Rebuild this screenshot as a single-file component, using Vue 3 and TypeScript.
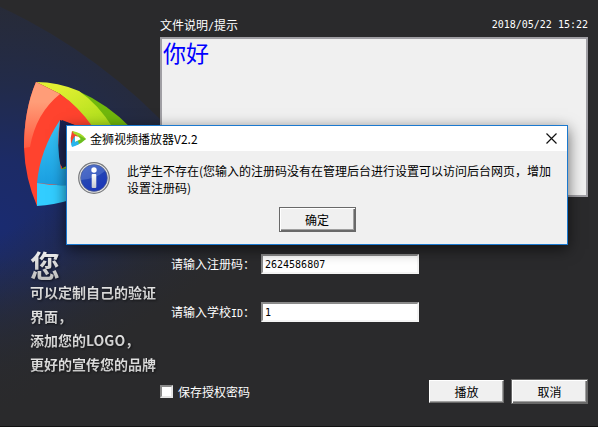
<script setup lang="ts">
import { ref } from 'vue'

const notice = ref('你好')
const regCode = ref('2624586807')
const schoolId = ref('1')
const remember = ref(false)
const dialogOpen = ref(true)
const slogans: string[] = ['可以定制自己的验证', '界面，', '添加您的LOGO，', '更好的宣传您的品牌']
</script>

<template>
  <div class="window">
    <svg class="glow" viewBox="0 0 598 427" preserveAspectRatio="xMinYMin slice" aria-hidden="true">
      <defs>
        <radialGradient id="halo" gradientUnits="userSpaceOnUse" cx="0" cy="225" r="215">
          <stop offset="0" stop-color="#1a2b70" />
          <stop offset="0.3" stop-color="#1c2b66" />
          <stop offset="0.65" stop-color="#222b4a" />
          <stop offset="1" stop-color="#262b3c" stop-opacity="0.8" />
        </radialGradient>
        <linearGradient id="fade" x1="0" y1="0" x2="0" y2="1">
          <stop offset="0.6" stop-color="#2a2a2c" stop-opacity="0" />
          <stop offset="0.98" stop-color="#2a2a2c" />
        </linearGradient>
        <linearGradient id="side" gradientUnits="userSpaceOnUse" x1="60" y1="120" x2="200" y2="330">
          <stop offset="0.25" stop-color="#2a2a2c" stop-opacity="0" />
          <stop offset="0.85" stop-color="#2a2a2c" />
        </linearGradient>
      </defs>
      <circle cx="-234" cy="510" r="555" fill="url(#halo)" />
      <rect width="598" height="427" fill="url(#fade)" />
      <rect width="598" height="427" fill="url(#side)" />
    </svg>

    <aside class="brand">
      <svg class="logo" viewBox="22 80 110 128" aria-hidden="true">
        <defs>
          <linearGradient id="salmon" x1="0" y1="0" x2="0" y2="1">
            <stop offset="0.3" stop-color="#ff9d78" />
            <stop offset="1" stop-color="#ff5a40" />
          </linearGradient>
          <linearGradient id="lime" x1="0" y1="0" x2="1" y2="1">
            <stop offset="0.2" stop-color="#e2f032" />
            <stop offset="1" stop-color="#a5dc18" />
          </linearGradient>
          <linearGradient id="sky" x1="0" y1="0" x2="0" y2="1">
            <stop offset="0" stop-color="#38c6f8" />
            <stop offset="1" stop-color="#1a9ee0" />
          </linearGradient>
        </defs>
        <path d="M78 91Q108 104 132 129L108 140Z" fill="#70b80c" />
        <path d="M36 82Q58 82 79 91Q98 104 113 128L92 127Q76 106 60 94Z" fill="url(#lime)" />
        <path d="M36 82Q24 110 24 148Q25 178 37 206L62 180V120L92 132V126Q78 106 60 94Z" fill="#ff432e" />
        <path d="M36 82Q24 110 24 148L30 147Q36 113 60 94Z" fill="url(#salmon)" />
        <path d="M60 120L92 131V136L68 168Q57 170 58 148Z" fill="#1c2350" />
        <path d="M60 120Q40 150 37 183L70 186V168L61 169Q56 145 60 120Z" fill="url(#sky)" />
        <path d="M37 183Q54 186 70 185V200Q54 205 37 206Z" fill="#32cdff" />
        <path d="M61 169L72 163V168Z" fill="#8ed51c" />
      </svg>
      <h1>您</h1>
      <p v-for="line in slogans" :key="line">{{ line }}</p>
    </aside>

    <main class="panel">
      <header class="bar">
        <label for="notice">文件说明<span class="half">/</span>提示</label>
        <time class="half" datetime="2018-05-22T15:22">2018/05/22 15:22</time>
      </header>
      <textarea id="notice" v-model="notice" class="notice" readonly></textarea>

      <div class="fields">
        <label for="code">请输入注册码：</label>
        <input id="code" v-model="regCode" type="text" />
        <label for="school">请输入学校<span class="half">ID</span>：</label>
        <input id="school" v-model="schoolId" type="text" />
      </div>

      <footer class="bar actions">
        <label class="remember"><input v-model="remember" type="checkbox" />保存授权密码</label>
        <div class="buttons">
          <button class="push" type="button">播放</button>
          <button class="push focus" type="button">取消</button>
        </div>
      </footer>
    </main>

    <section v-if="dialogOpen" class="dialog" role="alertdialog" aria-labelledby="dlg-title" aria-describedby="dlg-text">
      <div class="titlebar">
        <svg class="mini" viewBox="0 0 16 16" aria-hidden="true">
          <path d="M2 0Q0 7 1 13L5 9V5L10 6Q6 1 2 0Z" fill="#f4432c" />
          <path d="M2 0Q11 1 16 8L12 10Q8 4 4 3Z" fill="#a4d827" />
          <path d="M16 8Q12 12 7 14L5 11L11 8L8 4Z" fill="#6bbd20" />
          <path d="M5 5Q2 9 1 13L2 16Q6 15 9 13L8 10L5 11Z" fill="#29b5ed" />
        </svg>
        <h2 id="dlg-title">金狮视频播放器V2.2</h2>
        <button class="close" type="button" aria-label="关闭" @click="dialogOpen = false">
          <svg viewBox="0 0 11 11" aria-hidden="true"><path d="M0.5 0.5L10.5 10.5M10.5 0.5L0.5 10.5" stroke="#111" stroke-width="1.2" /></svg>
        </button>
      </div>
      <div class="message">
        <svg class="info" viewBox="0 0 32 32" aria-hidden="true">
          <defs>
            <linearGradient id="ball" x1="0" y1="0" x2="0.6" y2="1">
              <stop offset="0" stop-color="#3a5cc0" />
              <stop offset="0.5" stop-color="#2446b4" />
              <stop offset="1" stop-color="#1c37b8" />
            </linearGradient>
            <linearGradient id="stem" x1="0" y1="0" x2="0" y2="1">
              <stop offset="0" stop-color="#ffffff" />
              <stop offset="1" stop-color="#c4c8d0" />
            </linearGradient>
          </defs>
          <circle cx="16" cy="16" r="15.3" fill="#e4e4e4" stroke="#77797c" stroke-width="1.2" />
          <circle cx="16" cy="16" r="13.4" fill="url(#ball)" stroke="#5b6480" stroke-width="0.6" />
          <path d="M3 16A13 13 0 0 1 27 9Q18 17 3 18Z" fill="#7f9be0" opacity="0.35" />
          <circle cx="16" cy="8" r="2.7" fill="#fff" />
          <rect x="13.7" y="12" width="4.6" height="14" rx="1" fill="url(#stem)" />
        </svg>
        <p id="dlg-text">此学生不存在(您输入的注册码没有在管理后台进行设置可以访问后台网页，增加设置注册码)</p>
      </div>
      <button class="push focus ok" type="button" @click="dialogOpen = false">确定</button>
    </section>
  </div>
</template>

<style>
body {
  margin: 0;
  background: #2a2a2c;
}
</style>

<style scoped>
.window {
  position: relative;
  box-sizing: border-box;
  min-height: 100vh;
  display: grid;
  grid-template-columns: 160px 1fr;
  overflow: hidden;
  border-bottom: 1px solid #111;
  background: #2a2a2c;
  color: #fff;
  font: 12px/18px "Noto Sans CJK SC", sans-serif;
}
.window * {
  box-sizing: border-box;
}
h1,
h2,
p {
  margin: 0;
}
.glow {
  position: absolute;
  inset: 0;
  width: 100%;
  height: 100%;
}
.half {
  font-family: "DejaVu Sans Mono", monospace;
  font-size: 10px;
  line-height: 10px;
}
.brand {
  position: relative;
  padding: 80px 0 0 30px;
  white-space: nowrap;
}
.logo {
  display: block;
  width: 110px;
  height: 128px;
  margin: 0 0 40px -8px;
}
.brand h1,
.brand p {
  color: transparent;
  background: linear-gradient(#f4f4f4, #bdbdbd);
  background-clip: text;
  filter: drop-shadow(1px 1px 1px #0008);
}
.brand h1 {
  font-size: 30px;
  line-height: 32px;
  font-weight: 700;
}
.brand p {
  font-size: 14px;
  line-height: 24px;
  font-weight: 700;
}
.panel {
  position: relative;
  display: flex;
  flex-direction: column;
  padding: 16px 10px 22px 0;
}
.bar {
  display: flex;
  justify-content: space-between;
  align-items: center;
}
.notice {
  height: 160px;
  margin: 3px 0 0;
  padding: 0 1px;
  border: 2px solid #a09fa4;
  border-radius: 0;
  outline: 0;
  resize: none;
  background: #f0f0f0;
  color: #00f;
  font: 23px/26px "Noto Sans CJK SC", sans-serif;
}
.fields {
  display: grid;
  grid-template-columns: 90px 158px;
  row-gap: 28px;
  align-items: center;
  margin: 57px 0 0 11px;
  white-space: nowrap;
}
.fields label {
  line-height: 18px;
}
.fields input {
  width: 100%;
  height: 20px;
  padding: 0 2px;
  border: 2px solid;
  border-color: #8a8a8a #f4f4f4 #f4f4f4 #8a8a8a;
  border-radius: 0;
  background: #fff;
  color: #000;
  font: 10px/16px "DejaVu Sans Mono", monospace;
}
.actions {
  margin-top: auto;
}
.remember {
  display: flex;
  align-items: center;
  gap: 5px;
}
.remember input {
  appearance: none;
  width: 13px;
  height: 13px;
  margin: 0;
  border: 2px solid;
  border-color: #8a8a8a #e4e4e4 #e4e4e4 #8a8a8a;
  background: #fff;
}
.remember input:checked {
  background: #333;
}
.buttons {
  display: flex;
  align-items: center;
  gap: 7px;
}
.push {
  width: 75px;
  height: 23px;
  padding: 0;
  border: 1px solid;
  border-color: #fff #696969 #696969 #fff;
  border-radius: 0;
  background: #f0f0f0;
  box-shadow: inset -1px -1px #a0a0a0;
  color: #000;
  font: 12px/18px "Noto Sans CJK SC", sans-serif;
}
.focus {
  width: 77px;
  height: 25px;
  border-color: #696969;
  box-shadow: inset 1px 1px #fff, inset -1px -1px #696969, inset -2px -2px #a0a0a0;
}
.dialog {
  position: absolute;
  top: 125px;
  left: 66px;
  right: 30px;
  display: flex;
  flex-direction: column;
  padding-bottom: 12px;
  border: 1px solid #1b79cf;
  background: #f0f0f0;
  color: #000;
  box-shadow: 0 4px 14px #0009;
}
.titlebar {
  display: flex;
  align-items: center;
  height: 25px;
  padding: 0 10px 0 3px;
  background: #fff;
}
.mini {
  width: 16px;
  height: 16px;
}
.titlebar h2 {
  flex: 1;
  margin-left: 4px;
  font-size: 12px;
  font-weight: 400;
}
.close {
  display: flex;
  padding: 0;
  border: 0;
  background: none;
}
.close svg {
  width: 11px;
  height: 11px;
}
.message {
  display: flex;
  gap: 17px;
  padding: 11px 12px 11px 11px;
}
.info {
  flex: none;
  width: 32px;
  height: 32px;
}
.message p {
  line-height: 17px;
}
.ok {
  align-self: center;
}
</style>
